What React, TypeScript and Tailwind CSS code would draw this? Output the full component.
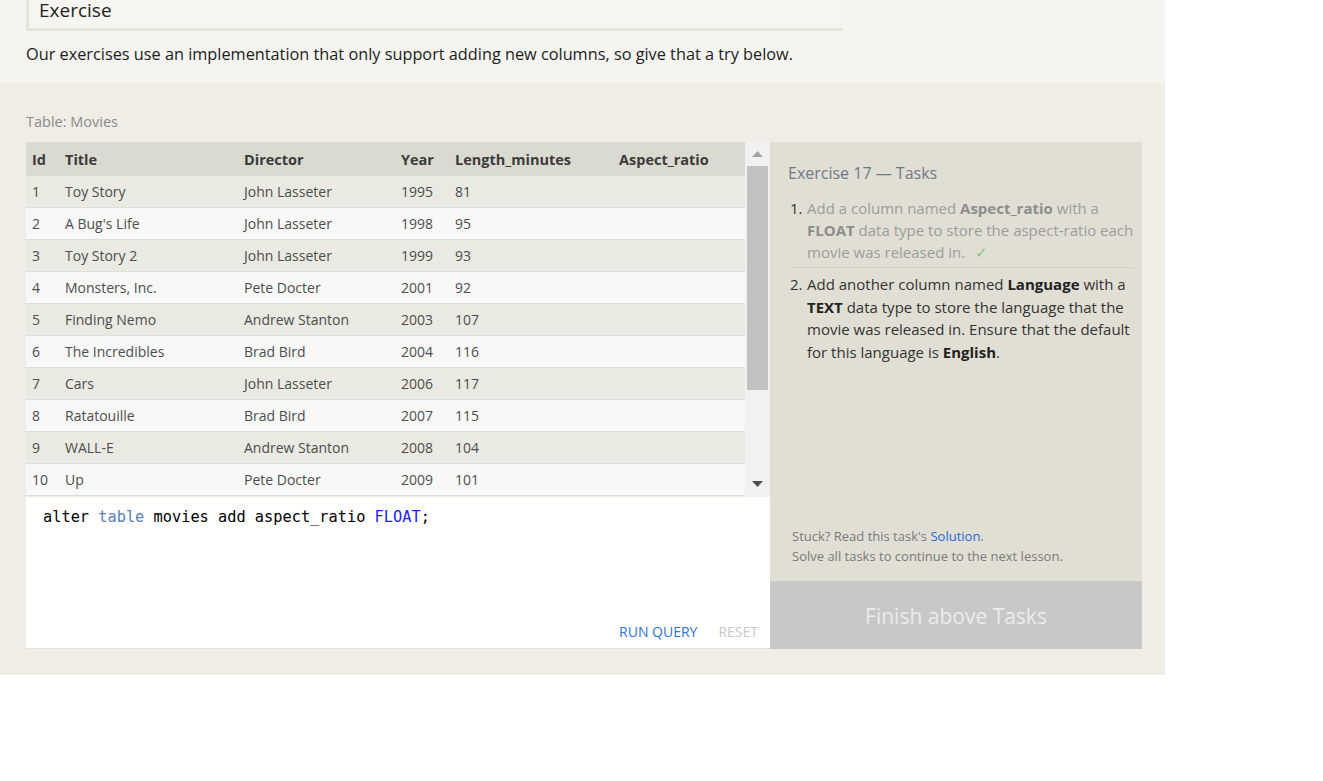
import React from "react";

const rows = [
  ["1", "Toy Story", "John Lasseter", "1995", "81"],
  ["2", "A Bug's Life", "John Lasseter", "1998", "95"],
  ["3", "Toy Story 2", "John Lasseter", "1999", "93"],
  ["4", "Monsters, Inc.", "Pete Docter", "2001", "92"],
  ["5", "Finding Nemo", "Andrew Stanton", "2003", "107"],
  ["6", "The Incredibles", "Brad Bird", "2004", "116"],
  ["7", "Cars", "John Lasseter", "2006", "117"],
  ["8", "Ratatouille", "Brad Bird", "2007", "115"],
  ["9", "WALL-E", "Andrew Stanton", "2008", "104"],
  ["10", "Up", "Pete Docter", "2009", "101"],
];

const cols = ["w-[33px]", "w-[179px]", "w-[157px]", "w-[54px]", "w-[164px]", "flex-1"];

export default function App() {
  return (
    <div className="w-[1323px] h-[781px] bg-white font-['Open_Sans',sans-serif] text-[15px]">
      <div className="w-[1165px]">
        {/* top section */}
        <div className="bg-[#f5f4f0] h-[83px] px-[26px] pt-0">
          <div className="w-[817px] h-[31px] bg-[#f6f5f1] border-l-[3px] border-b-[3px] border-[#e6e5da] flex items-end pl-[10px] pb-[8px]">
            <span className="text-[19px] leading-none text-[#222]">Exercise</span>
          </div>
          <p className="mt-[13px] text-[16.3px] leading-[20px] text-[#1c1c1c]">
            Our exercises use an implementation that only support adding new columns, so give that a try below.
          </p>
        </div>
        {/* exercise section */}
        <div className="bg-[#efede6] h-[592px] px-[26px] pt-[29px]">
          <div className="text-[14.5px] leading-[20px] text-[#8a8a8a] h-[30px]">Table: Movies</div>
          <div className="flex w-[1116px] h-[507px]">
            {/* left */}
            <div className="w-[744px] flex flex-col">
              <div className="flex h-[355px]">
                <div className="w-[719px] flex flex-col">
                  <div className="flex h-[34px] bg-[#dbdad0] items-center font-bold text-[#3b3b3b] text-[14.5px]">
                    {["Id", "Title", "Director", "Year", "Length_minutes", "Aspect_ratio"].map((h, i) => (
                      <div key={h} className={`${cols[i]} pl-[6px] pt-[1px]`}>{h}</div>
                    ))}
                  </div>
                  {rows.map((r, ri) => (
                    <div
                      key={ri}
                      className={`flex h-[32px] items-center text-[#4d4d4d] text-[14px] border-b border-[#dededb] ${
                        ri % 2 === 0 ? "bg-[#eae9e2]" : "bg-[#f8f8f8]"
                      }`}
                    >
                      {[...r, ""].map((c, ci) => (
                        <div key={ci} className={`${cols[ci]} pl-[6px]`}>{c}</div>
                      ))}
                    </div>
                  ))}
                </div>
                {/* scrollbar */}
                <div className="w-[25px] bg-[#f1f1f1] flex flex-col items-center">
                  <svg width="11" height="6" viewBox="0 0 11 6" className="mt-[9px]">
                    <polygon points="0,6 5.5,0 11,6" fill="#a3a3a3" />
                  </svg>
                  <div className="w-[21px] h-[224px] bg-[#c1c1c1] mt-[9px]" />
                  <div className="flex-1" />
                  <svg width="11" height="6" viewBox="0 0 11 6" className="mb-[10px]">
                    <polygon points="0,0 11,0 5.5,6" fill="#505050" />
                  </svg>
                </div>
              </div>
              {/* editor */}
              <div className="bg-white flex-1 flex flex-col border-b border-[#e2e1da]">
                <div className="pl-[17px] pt-[10px] font-['DejaVu_Sans_Mono',monospace] text-[15.3px] leading-[20px] text-black">
                  alter <span className="text-[#5a7fb5]">table</span> movies add aspect_ratio{" "}
                  <span className="text-[#2222ff]">FLOAT</span>;
                </div>
                <div className="flex-1" />
                <div className="flex justify-end gap-[21px] pr-[12px] pb-[6px] text-[14px] leading-[20px]">
                  <span className="text-[#2f74d6]">RUN QUERY</span>
                  <span className="text-[#c9c9c9]">RESET</span>
                </div>
              </div>
            </div>
            {/* right panel */}
            <div className="w-[372px] bg-[#e1dfd4] flex flex-col">
              <div className="flex-1 flex flex-col pl-[18px] pr-[8px]">
                <div className="mt-[20px] text-[16px] leading-[22px] text-[#707888]">Exercise 17 — Tasks</div>
                <ol className="mt-[13px] text-[15px] leading-[22px]">
                  <li className="flex text-[#9c9c9c] pb-[4px] border-b border-[#d2d0c6] ml-[2px]">
                    <span className="w-[17px] text-[#333]">1.</span>
                    <span className="flex-1">
                      Add a column named <b className="text-[#8d8d8d]">Aspect_ratio</b> with a{" "}
                      <b className="text-[#8d8d8d]">FLOAT</b> data type to store the aspect-ratio each movie was released in.
                      <span className="ml-[10px] text-[#86c486]">✓</span>
                    </span>
                  </li>
                  <li className="flex text-[#333] pt-[5px] ml-[2px] leading-[22.5px]">
                    <span className="w-[17px]">2.</span>
                    <span className="flex-1">
                      Add another column named <b className="text-[#222]">Language</b> with a <b className="text-[#222]">TEXT</b>{" "}
                      data type to store the language that the movie was released in. Ensure that the default for this
                      language is <b className="text-[#222]">English</b>.
                    </span>
                  </li>
                </ol>
                <div className="flex-1" />
                <div className="pl-[4px] pb-[15px] text-[13px] leading-[20px] text-[#7a7a7a]">
                  <div>
                    Stuck? Read this task's <span className="text-[#2a66d4]">Solution</span>.
                  </div>
                  <div>Solve all tasks to continue to the next lesson.</div>
                </div>
              </div>
              <div className="h-[68px] bg-[#c8c8c8] flex items-center justify-center text-[21px] text-[#ebebeb] pt-[4px]">
                Finish above Tasks
              </div>
            </div>
          </div>
        </div>
      </div>
    </div>
  );
}
